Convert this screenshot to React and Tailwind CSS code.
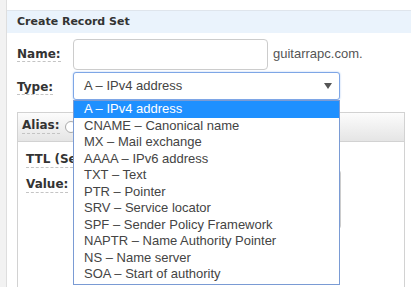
import React from "react";

const types = [
  "A – IPv4 address",
  "CNAME – Canonical name",
  "MX – Mail exchange",
  "AAAA – IPv6 address",
  "TXT – Text",
  "PTR – Pointer",
  "SRV – Service locator",
  "SPF – Sender Policy Framework",
  "NAPTR – Name Authority Pointer",
  "NS – Name server",
  "SOA – Start of authority",
];

const label = "font-['DejaVu_Sans',sans-serif] font-bold text-[12px] text-[#333] border-b border-dashed border-[#c4c4c4] leading-[15px]";

export default function App() {
  return (
    <div className="flex h-[287px] w-[411px] overflow-hidden bg-white font-['Liberation_Sans',Arial,sans-serif]">
      <div className="w-[7px] shrink-0 bg-[#f2f2f2] border-r border-[#dedede]" />
      <div className="flex-1 pt-[10px]">
        {/* header */}
        <div className="h-[23px] border-t border-[#dfe5ec] bg-[#eaf3fc] pl-[10px] flex items-center font-['DejaVu_Sans',sans-serif] font-bold text-[11px] text-[#333]">
          Create Record Set
        </div>

        <div className="pl-[10px] pt-[6px]">
          {/* name */}
          <div className="flex items-center">
            <div className="w-[56px] mt-[-3px]">
              <span className={label}>Name:</span>
            </div>
            <div className="w-[195px] h-[31px] border border-[#cccccc] rounded-[4px] bg-white" />
            <span className="ml-[5px] text-[13px] text-[#555] mt-[-2px]">guitarrapc.com.</span>
          </div>

          {/* type */}
          <div className="relative z-10 flex items-center mt-[2px]">
            <div className="w-[56px]">
              <span className={label}>Type:</span>
            </div>
            <div className="relative">
              <div className="w-[267px] h-[28px] border border-[#7ea6e6] rounded-[3px] bg-white flex items-center justify-between pl-[10px] pr-[7px] text-[13px] text-[#444] shadow-[0_0_2px_#a9c6f2]">
                <span>A – IPv4 address</span>
                <svg width="8" height="6" viewBox="0 0 8 6">
                  <path d="M0 0 L8 0 L4 6 Z" fill="#555" />
                </svg>
              </div>
              {/* open list */}
              <div className="absolute left-0 top-full w-[267px] border border-[#7a9bd4] bg-white pb-[1px]">
                {types.map((t, i) => (
                  <div
                    key={t}
                    className={
                      "h-[16.5px] leading-[16.5px] pl-[10px] text-[13px] whitespace-nowrap " +
                      (i === 0 ? "bg-[#1e90ff] text-white" : "text-[#444]")
                    }
                  >
                    {t}
                  </div>
                ))}
              </div>
            </div>
          </div>

          {/* alias panel */}
          <div className="mt-[12px] w-[388px] h-[200px] border border-[#d2d2d2]">
            <div className="h-[29px] border-b border-[#d2d2d2] bg-gradient-to-b from-[#fcfcfc] to-[#e5e5e5] flex items-center pl-[4px] gap-[5px]">
              <span className={label + " mt-[-3px]"}>Alias:</span>
              <div className="w-[12px] h-[12px] rounded-full border border-[#aaa] bg-white" />
            </div>
            <div className="pl-[8px] pt-[10px]">
              <div className="flex">
                <span className={label + " whitespace-nowrap"}>TTL (Seconds):</span>
              </div>
              <div className="flex items-start mt-[9px]">
                <span className={label}>Value:</span>
                <div className="ml-[13px] mt-[-7px] w-[260px] h-[59px] border border-[#cccccc] rounded-[3px]" />
              </div>
            </div>
          </div>
        </div>
      </div>
    </div>
  );
}
